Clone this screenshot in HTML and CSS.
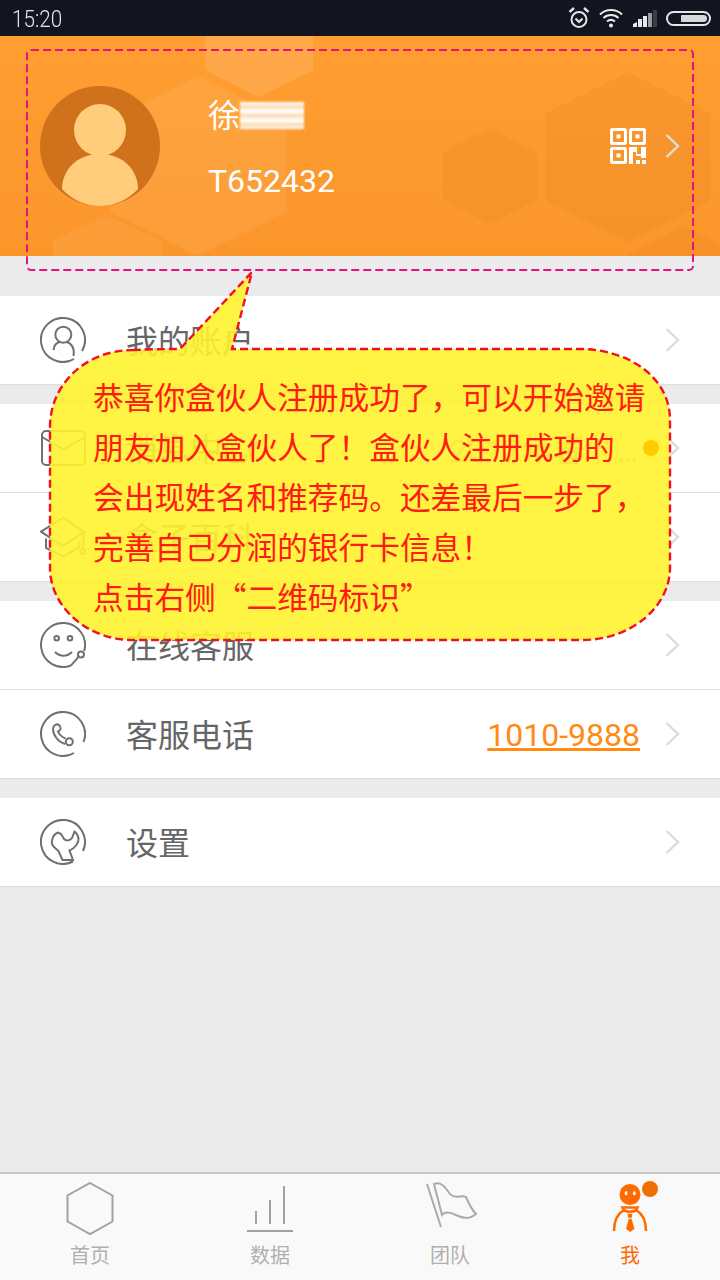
FILE: index.html
```html
<!DOCTYPE html>
<html lang="zh-CN">
<head>
  <meta charset="UTF-8" />
  <meta name="viewport" content="width=device-width, initial-scale=1.0" />
  <title>我</title>
  <link rel="stylesheet" href="styles.css">
</head>
<body>

  <!-- Status bar -->
  <div class="status_bar">
    <span class="status_time">15:20</span>
    <div class="status_icons">
      <svg class="ic_alarm" width="22" height="24" viewBox="0 0 22 24" fill="none" stroke="#e4e4e4" stroke-width="2">
        <circle cx="11" cy="13.5" r="7.5"/>
        <path d="M1.5 6 L6 2 M20.5 6 L16 2" stroke-width="2.4"/>
        <path d="M7.5 12.5 L11 16 L14.5 12.5" stroke-width="2.2"/>
      </svg>
      <svg class="ic_wifi" width="24" height="22" viewBox="0 0 24 22" fill="none" stroke="#e8e8e8" stroke-width="2">
        <path d="M1 7.5 C7 1.5 17 1.5 23 7.5"/>
        <path d="M4.5 11 C8.5 7 15.5 7 19.5 11"/>
        <path d="M8 14.5 C10.5 12.5 13.5 12.5 16 14.5"/>
        <circle cx="12" cy="18.5" r="2" fill="#e8e8e8" stroke="none"/>
      </svg>
      <svg class="ic_signal" width="24" height="17" viewBox="0 0 24 17">
        <path d="M0 17 L0 14 L4 12 L4 17 Z" fill="#e8e8e8"/>
        <rect x="5" y="9" width="4" height="8" fill="#e8e8e8"/>
        <rect x="10" y="6" width="4" height="11" fill="#e8e8e8"/>
        <rect x="15" y="3" width="4" height="14" fill="#9a9ca2"/>
        <rect x="20" y="0" width="4" height="17" fill="#3c3f48"/>
      </svg>
      <div class="battery"><div class="battery_level"></div></div>
    </div>
  </div>

  <!-- Profile header -->
  <div class="profile">
    <svg class="profile_hex" width="720" height="220" viewBox="0 0 720 220">
      <path d="M205 -28 L259 -28 L313 0 L313 34 L259 61 L205 34 Z" fill="#fff" opacity="0.12"/>
      <path d="M198 40 L286 84 L286 176 L198 220 L110 176 L110 84 Z" fill="#fff" opacity="0.07"/>
      <path d="M107 180 L161 204 L161 220 L53 220 L53 204 Z" fill="#fff" opacity="0.06"/>
      <path d="M490 92 L537 116 L537 164 L490 188 L443 164 L443 116 Z" fill="#a85a10" opacity="0.07"/>
      <path d="M628 36 L711 78 L711 164 L628 206 L545 164 L545 78 Z" fill="#a85a10" opacity="0.07"/>
      <path d="M683 190 L720 208 L720 220 L625 220 Z" fill="#a85a10" opacity="0.07"/>
    </svg>
    <svg class="avatar" width="120" height="120" viewBox="0 0 120 120">
      <circle cx="60" cy="60" r="60" fill="#d0711b"/>
      <ellipse cx="60" cy="44" rx="26" ry="26" fill="#ffcd7c"/>
      <path d="M22 103 C22 85 36 68 60 68 C84 68 98 85 98 103 C88 114 74 120 60 120 C46 120 32 114 22 103 Z" fill="#ffcd7c"/>
    </svg>
    <div class="profile_info">
      <div class="profile_name">徐<span class="name_blur"></span></div>
      <div class="profile_code">T652432</div>
    </div>
    <svg class="qr" width="36" height="36" viewBox="0 0 36 36" fill="none" stroke="#fff" stroke-width="3">
      <rect x="1.5" y="1.5" width="14" height="14" rx="1"/>
      <rect x="20.5" y="1.5" width="14" height="14" rx="1"/>
      <rect x="1.5" y="20.5" width="14" height="14" rx="1"/>
      <g fill="#fff" stroke="none">
        <rect x="6.5" y="6.5" width="4" height="4"/>
        <rect x="25.5" y="6.5" width="4" height="4"/>
        <rect x="6.5" y="25.5" width="4" height="4"/>
        <path d="M19 19 H27 V26 H31 V19 H36 V30 H31 V28 H26 V24 H23 V36 H19 Z"/>
        <rect x="26" y="32" width="4" height="4"/>
        <rect x="32" y="32" width="4" height="4"/>
      </g>
    </svg>
    <svg class="chevron" width="15" height="24" viewBox="0 0 15 24" fill="none" stroke="#dfe0dc" stroke-width="2.4">
      <path d="M1.5 1 L13 12 L1.5 23"/>
    </svg>
  </div>

  <!-- Menu -->
  <div class="menu">
    <div class="menu_group first">
      <div class="menu_row">
        <svg class="menu_icon" width="46" height="46" viewBox="0 0 46 46" fill="none">
          <path d="M42 34 A22 22 0 1 0 34 42"/>
          <circle cx="23.3" cy="17.7" r="8"/>
          <path d="M13.5 33 C14 28 17 25.5 20 25 M26.5 25 C31 26 35 31 33.5 39"/>
        </svg>
        <span class="menu_label">我的账户</span>
        <svg class="menu_arrow" width="15" height="24" viewBox="0 0 15 24"><path d="M1.5 1 L13 12 L1.5 23"/></svg>
      </div>
    </div>

    <div class="menu_group">
      <div class="menu_row">
        <svg class="menu_icon" width="46" height="46" viewBox="0 0 46 46" fill="none">
          <rect x="2" y="6" width="43" height="34" rx="4"/>
          <path d="M2 12 L23.3 24.3 L45 12"/>
        </svg>
        <span class="menu_label">消息中心</span>
        <span class="menu_note">2017年春节…</span>
        <span class="menu_dot"></span>
        <svg class="menu_arrow" width="15" height="24" viewBox="0 0 15 24"><path d="M1.5 1 L13 12 L1.5 23"/></svg>
      </div>
      <div class="menu_row">
        <svg class="menu_icon" width="46" height="46" viewBox="0 0 46 46" fill="none">
          <path d="M1 17.7 L23.3 3.7 L44 17.7 L23 32 Z"/>
          <path d="M6 24.5 V34 L23.3 42.7 L39.3 33 V28"/>
          <path d="M44 17.7 L42.7 35"/>
          <circle cx="42.7" cy="37.7" r="2.4"/>
        </svg>
        <span class="menu_label">盒子百科</span>
        <svg class="menu_arrow" width="15" height="24" viewBox="0 0 15 24"><path d="M1.5 1 L13 12 L1.5 23"/></svg>
      </div>
    </div>

    <div class="menu_group">
      <div class="menu_row">
        <svg class="menu_icon" width="46" height="46" viewBox="0 0 46 46" fill="none">
          <path d="M44.2 29 A22 22 0 1 0 31 43.5"/>
          <circle cx="16.7" cy="16.3" r="2.3"/>
          <circle cx="30" cy="16.3" r="2.3"/>
          <path d="M15 30 C20 35 27 35 32 30"/>
          <circle cx="41" cy="32.5" r="3"/>
          <path d="M38.5 34.5 C36.5 37.5 34 40 31 43.5"/>
        </svg>
        <span class="menu_label">在线客服</span>
        <svg class="menu_arrow" width="15" height="24" viewBox="0 0 15 24"><path d="M1.5 1 L13 12 L1.5 23"/></svg>
      </div>
      <div class="menu_row">
        <svg class="menu_icon" width="46" height="46" viewBox="0 0 46 46" fill="none">
          <path d="M34 42 A22 22 0 1 1 43.5 31"/>
          <circle cx="29.3" cy="30.7" r="3.5"/>
          <path d="M25 33 C18 31 13 24 13 18 C13 14 17 12.5 19 14 C21.5 16 21 19.5 18 20.5 C19 23 22 26 25.5 27.5"/>
        </svg>
        <span class="menu_label">客服电话</span>
        <span class="menu_phone">1010-9888</span>
        <svg class="menu_arrow" width="15" height="24" viewBox="0 0 15 24"><path d="M1.5 1 L13 12 L1.5 23"/></svg>
      </div>
    </div>

    <div class="menu_group">
      <div class="menu_row">
        <svg class="menu_icon" width="46" height="46" viewBox="0 0 46 46" fill="none">
          <path d="M33 42.5 A22 22 0 1 1 43 32"/>
          <path d="M18 13.5 C12 16 10 24 14 28 L18.5 32 L22.5 41 L33 41 L29.5 31.5 C35 29 39 24 38.5 19.5 C38 16 36.5 14 34.5 12.5 L32 19 C30 22 26 22 24 20 L21 15 Z"/>
        </svg>
        <span class="menu_label">设置</span>
        <svg class="menu_arrow" width="15" height="24" viewBox="0 0 15 24"><path d="M1.5 1 L13 12 L1.5 23"/></svg>
      </div>
    </div>
  </div>

  <!-- Tab bar -->
  <div class="tab_bar">
    <div class="tab">
      <svg class="tab_icon" width="60" height="56" viewBox="0 0 60 56" fill="none" stroke="#a2a2a2" stroke-width="2">
        <path d="M30 2 L52.5 14.5 L52.5 40.5 L30 53 L7.5 40.5 L7.5 14.5 Z"/>
      </svg>
      <span>首页</span>
    </div>
    <div class="tab">
      <svg class="tab_icon" width="60" height="56" viewBox="0 0 60 56" fill="none" stroke="#a2a2a2" stroke-width="2">
        <path d="M7 50 H53" />
        <path d="M16 30 V43 M30 19 V43 M44 5 V43"/>
      </svg>
      <span>数据</span>
    </div>
    <div class="tab">
      <svg class="tab_icon" width="60" height="56" viewBox="0 0 60 56" fill="none" stroke="#aaa" stroke-width="2">
        <path d="M7 3 L21 46"/>
        <path d="M14 3 C22 0 26 8 30 13 C35 19 41 13 46 16 C49 23 53 30 56 33 C49 39 43 37 36 34 C30 31 25 30 22 34 Z"/>
      </svg>
      <span>团队</span>
    </div>
    <div class="tab active">
      <svg class="tab_icon" width="60" height="56" viewBox="0 0 60 56">
        <circle cx="30" cy="13.5" r="10.5" fill="#ff6a00"/>
        <rect x="24.8" y="10.3" width="2.6" height="4" rx="1.3" fill="#fff"/>
        <rect x="33" y="10.3" width="2.6" height="4" rx="1.3" fill="#fff"/>
        <path d="M14 50 C14 40 17 33 24 29 L22.5 26.5 H37.5 L36 29 C43 33 46 40 46 50 M24 29.5 Q30 32 36 29.5" fill="none" stroke="#ff6a00" stroke-width="2.5"/>
        <path d="M27.5 32.7 H32.5 L31.8 36.7 H28.2 Z M28.8 37.7 H31.5 L34.5 47.7 L30.2 51 L26 47.7 Z" fill="#ff6a00"/>
      </svg>
      <span>我</span>
      <span class="tab_badge"></span>
    </div>
  </div>

  <!-- Guide overlay: dashed frame and speech bubble -->
  <svg class="guide" width="720" height="1280" viewBox="0 0 720 1280">
    <rect class="guide_frame" x="27" y="50" width="666" height="220" rx="4"/>
    <path class="guide_bubble" d="M133 350 Q155 349 180 349 L252 272 L232 349 H582 C630 350 670 378 670 420 V568 C670 606 632 640 582 640 H133 C86 640 50 606 50 568 V427 C50 384 86 350 133 350 Z"/>
  </svg>
  <div class="guide_text">恭喜你盒伙人注册成功了，可以开始邀请<br>朋友加入盒伙人了！盒伙人注册成功的<br>会出现姓名和推荐码。还差最后一步了，<br>完善自己分润的银行卡信息！<br>点击右侧“二维码标识”</div>

</body>
</html>
```

FILE: styles.css
```css
/* Page */
html, body {
  margin: 0;
  padding: 0;
}

body {
  position: relative;
  width: 720px;
  height: 1280px;
  display: flex;
  flex-direction: column;
  overflow: hidden;
  background-color: #ebebeb;
  font-family: Roboto, "Noto Sans CJK SC", sans-serif;
}

/* Status bar */
.status_bar {
  height: 36px;
  display: flex;
  align-items: center;
  justify-content: space-between;
  padding: 0 9px 0 12px;
  background-color: #12151f;
  color: #e6e6e6;
}

.status_time {
  font-size: 24px;
  font-weight: 300;
  transform: scaleX(0.86);
  transform-origin: left center;
  margin-top: 2px;
}

.status_icons {
  display: flex;
  align-items: center;
  gap: 9px;
}

.ic_signal {
  margin-left: 1px;
}

.battery {
  width: 45px;
  height: 15px;
  padding: 2px 2px 2px 13px;
  box-sizing: border-box;
  border: 2px solid #e6e6e6;
  border-radius: 8px;
}

.battery_level {
  height: 100%;
  background-color: #d8d8d8;
  border-radius: 1px 4px 4px 1px;
}

/* Profile header */
.profile {
  position: relative;
  height: 220px;
  display: flex;
  align-items: center;
  padding: 0 40px;
  box-sizing: border-box;
  overflow: hidden;
  background: linear-gradient(#ff9e32, #fb962b);
  color: #fff;
}

.profile_hex {
  position: absolute;
  left: 0;
  top: 0;
}

.avatar, .profile_info, .qr, .chevron {
  position: relative;
  flex: none;
}

.profile_info {
  margin-left: 48px;
  display: flex;
  flex-direction: column;
  gap: 27px;
  margin-top: 4px;
}

.profile_name, .profile_code {
  font-size: 32px;
  line-height: 38px;
  display: flex;
  align-items: center;
}

.name_blur {
  width: 64px;
  height: 27px;
  background: repeating-linear-gradient(#fff 0, #fff 2px, #ffd4a0 4px, #ffe6c8 6px, #fff 9px);
  filter: blur(0.8px);
}

.qr {
  margin-left: auto;
}

.chevron {
  margin-left: 19px;
}

/* Menu */
.menu {
  flex: 1;
}

.menu_group {
  margin-top: 20px;
  background-color: #fff;
  box-shadow: 0 1px 1px #dedede;
}

.menu_group.first {
  margin-top: 40px;
}

.menu_row {
  height: 88px;
  display: flex;
  align-items: center;
  padding: 0 40px;
}

.menu_row + .menu_row {
  border-top: 1px solid #e0e0e0;
}

.menu_icon {
  flex: none;
  stroke: #707070;
  stroke-width: 2;
}

.menu_label {
  margin-left: 40px;
  padding-bottom: 3px;
  font-size: 32px;
  color: #666;
}

.menu_note {
  margin-left: auto;
  width: 190px;
  font-size: 32px;
  color: #999;
  white-space: nowrap;
}

/* the dot stays bright on top of the guide bubble */
.menu_dot {
  position: relative;
  z-index: 2;
  width: 16px;
  height: 16px;
  margin-left: 4px;
  margin-right: -20px;
  border-radius: 50%;
  background-color: #ffcc00;
}

.menu_phone {
  margin-left: auto;
  margin-right: -1px;
  padding-top: 1px;
  font-size: 32px;
  color: #ff8a14;
  text-decoration: underline;
}

.menu_arrow {
  margin-left: 26px;
  flex: none;
  fill: none;
  stroke: #dcdcdc;
  stroke-width: 2.4;
}

.menu_label + .menu_arrow {
  margin-left: auto;
}

/* Tab bar */
.tab_bar {
  height: 108px;
  display: flex;
  box-sizing: border-box;
  border-top: 2px solid #c9c9c9;
  background-color: #f9f9f9;
}

.tab {
  position: relative;
  flex: 1;
  display: flex;
  flex-direction: column;
  align-items: center;
  padding-top: 7px;
  font-size: 20px;
  line-height: 28px;
  color: #b0b0b0;
}

.tab_icon {
  margin-bottom: 5px;
}

.tab.active {
  color: #ff6a00;
}

.tab_badge {
  position: absolute;
  left: 102px;
  top: 7px;
  width: 16px;
  height: 16px;
  border-radius: 50%;
  background-color: #ee7000;
}

/* Guide overlay */
.guide {
  position: absolute;
  left: 0;
  top: 0;
  pointer-events: none;
}

.guide_frame {
  fill: none;
  stroke: #e8127e;
  stroke-width: 2;
  stroke-dasharray: 8 4;
}

.guide_bubble {
  fill: #fff22f;
  fill-opacity: 0.9;
  stroke: #f21028;
  stroke-width: 2.4;
  stroke-dasharray: 8 4;
}

.guide_text {
  position: absolute;
  left: 93px;
  top: 371px;
  font-family: "Noto Sans CJK SC", sans-serif;
  font-size: 30.7px;
  line-height: 50px;
  color: #ff1a12;
  white-space: nowrap;
}
```
